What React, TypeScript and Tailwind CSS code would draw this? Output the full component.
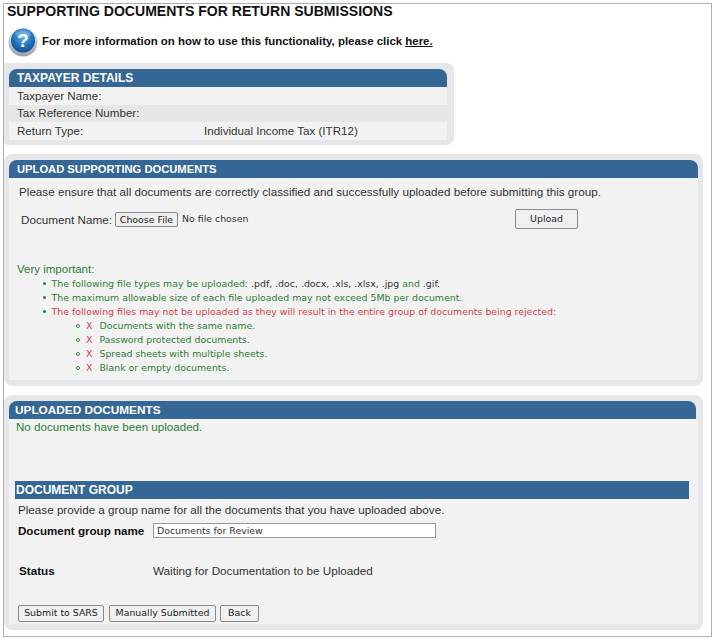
const sans = { fontFamily: '"Liberation Sans", Arial, sans-serif' };

function HelpIcon() {
  return (
    <svg width="30" height="30" viewBox="0 0 30 30" className="shrink-0">
      <defs>
        <radialGradient id="ball" cx="50%" cy="35%" r="65%">
          <stop offset="0%" stopColor="#5cb4ec" />
          <stop offset="60%" stopColor="#1f74bd" />
          <stop offset="100%" stopColor="#0f4f92" />
        </radialGradient>
        <linearGradient id="ring" x1="0" y1="0" x2="0" y2="1">
          <stop offset="0%" stopColor="#e4e8ec" />
          <stop offset="100%" stopColor="#9aa3ab" />
        </linearGradient>
      </defs>
      <ellipse cx="15" cy="15.5" rx="14.5" ry="14" fill="url(#ring)" />
      <circle cx="15" cy="13.5" r="12" fill="url(#ball)" />
      <ellipse cx="15" cy="7" rx="8" ry="4" fill="#ffffff" opacity="0.22" />
      <text x="15" y="20" textAnchor="middle" fontSize="19" fontWeight="700" fill="#ffffff" fontFamily="Liberation Sans, sans-serif">?</text>
    </svg>
  );
}

function Bar({ children, className = "" }: { children: React.ReactNode; className?: string }) {
  return (
    <div className={`h-[18px] bg-[#356796] font-bold leading-[18px] text-white ${className}`}>
      {children}
    </div>
  );
}

function Row({ label, value, alt }: { label: string; value?: string; alt?: boolean }) {
  return (
    <div className={`flex h-[17.5px] items-center pb-[1px] pl-2 text-[11.6px] text-[#333] ${alt ? "bg-[#e6e6e6]" : "bg-[#f2f2f2]"}`}>
      <span className="w-[187px]">{label}</span>
      <span>{value}</span>
    </div>
  );
}

const tiny = "font-['DejaVu_Sans',sans-serif] text-[9.4px]";

function Sub({ children }: { children: string }) {
  return (
    <li className="flex h-[14px] items-center">
      <span className="ml-[67px] mr-[6px] h-[4px] w-[4px] rounded-full border border-[#3d8a45]" />
      <span className="mr-[7px] text-[#d8404a]">X</span>
      <span className="text-[#2f7d38]">{children}</span>
    </li>
  );
}

function Dot() {
  return <span className="ml-[34px] mr-[6px] h-[2.5px] w-[2.5px] rounded-full bg-[#2f7d38]" />;
}

function Btn({ children, className = "" }: { children: string; className?: string }) {
  return (
    <button className={`rounded-[2px] border border-[#8a8a8a] bg-[#f0f0f0] text-[#222] ${tiny} ${className}`}>
      {children}
    </button>
  );
}

export default function App() {
  return (
    <div className="h-[642px] w-[722px] overflow-hidden bg-white pl-[3px] pt-[3px]" style={sans}>
      <div className="h-[634px] w-[709px] border border-[#b0b0b0]">
        <h1 className="ml-[3px] h-[17px] text-[14.05px] font-bold leading-[15px] text-[#111]">
          SUPPORTING DOCUMENTS FOR RETURN SUBMISSIONS
        </h1>
        <div className="ml-[4px] mt-[6px] flex h-[30px] items-center gap-[4px]">
          <HelpIcon />
          <p className="text-[11.45px] font-bold text-[#111]">
            For more information on how to use this functionality, please click <span className="underline">here.</span>
          </p>
        </div>

        <section className="mt-[6px] w-[450px] rounded-r-[8px] rounded-bl-[4px] bg-[#e6e7e8] px-[5px] pb-[5px] pt-[6px]">
          <Bar className="w-[438px] rounded-t-[8px] pl-[8px] text-[12px]">TAXPAYER DETAILS</Bar>
          <div className="w-[438px]">
            <Row label="Taxpayer Name:" />
            <Row label="Tax Reference Number:" alt />
            <Row label="Return Type:" value="Individual Income Tax (ITR12)" />
          </div>
        </section>

        <section className="mt-[9px] h-[232px] w-[699px] rounded-[8px] bg-[#e6e7e8] px-[5px] pb-[6px] pt-[6px]">
          <Bar className="rounded-t-[8px] pl-[8px] text-[11.2px] leading-[17px]">UPLOAD SUPPORTING DOCUMENTS</Bar>
          <div className="h-[202px] bg-[#f2f2f2]">
            <p className="pl-[10px] pt-[6px] text-[11.68px] leading-[15px] text-[#333]">
              Please ensure that all documents are correctly classified and successfully uploaded before submitting this group.
            </p>
            <div className="mt-[10px] flex h-[20px] items-center pl-[12px] text-[11.7px] text-[#333]">
              <span className="w-[94px] pt-[3px]">Document Name:</span>
              <Btn className="mt-[1px] h-[15px] w-[63px]">Choose File</Btn>
              <span className={`ml-[4px] w-[333px] pt-[1px] text-[#333] ${tiny}`}>No file chosen</span>
              <Btn className="h-[20px] w-[63px] pt-[1px]">Upload</Btn>
            </div>
            <p className="mt-[33px] pl-[8px] text-[11.5px] leading-[15px] text-[#2f7d38]">Very important:</p>
            <ul className={`${tiny} leading-[14px]`}>
              <li className="flex h-[14px] items-center text-[#2f7d38]">
                <Dot />
                <span>
                  The following file types may be uploaded: <span className="text-[#333]">.pdf, .doc, .docx, .xls, .xlsx, .jpg</span> and <span className="text-[#333]">.gif.</span>
                </span>
              </li>
              <li className="flex h-[14px] items-center text-[#2f7d38]">
                <Dot />
                <span>The maximum allowable size of each file uploaded may not exceed 5Mb per document.</span>
              </li>
              <li className="flex h-[14px] items-center text-[#d8404a]">
                <Dot />
                <span>The following files may not be uploaded as they will result in the entire group of documents being rejected:</span>
              </li>
              <Sub>Documents with the same name.</Sub>
              <Sub>Password protected documents.</Sub>
              <Sub>Spread sheets with multiple sheets.</Sub>
              <Sub>Blank or empty documents.</Sub>
            </ul>
          </div>
        </section>

        <section className="mt-[9px] h-[235px] w-[699px] rounded-[8px] bg-[#e6e7e8] px-[5px] pb-[6px] pt-[6px]">
          <Bar className="w-[687px] rounded-t-[8px] pl-[6px] text-[11.8px]">UPLOADED DOCUMENTS</Bar>
          <div className="h-[205px] bg-[#f2f2f2]">
            <p className="pl-[7px] text-[11.6px] leading-[15px] text-[#2f7d38]">No documents have been uploaded.</p>
            <div className="ml-[6px] mt-[47px] w-[674px]">
              <Bar className="pl-[1px] text-[12px]">DOCUMENT GROUP</Bar>
            </div>
            <p className="ml-[9px] mt-[3px] text-[11.67px] leading-[15px] text-[#333]">
              Please provide a group name for all the documents that you have uploaded above.
            </p>
            <div className="mt-[4px] flex h-[20px] items-center pl-[9px]">
              <span className="w-[135px] text-[11.6px] font-bold text-[#111]">Document group name</span>
              <input
                readOnly
                value="Documents for Review"
                className={`h-[15px] w-[283px] border border-[#9a9a9a] bg-white pl-[3px] text-[#333] ${tiny}`}
              />
            </div>
            <div className="mt-[22px] flex h-[16px] items-center pl-[10px] text-[11.7px]">
              <span className="w-[134px] font-bold text-[#111]">Status</span>
              <span className="text-[#333]">Waiting for Documentation to be Uploaded</span>
            </div>
            <div className="mt-[26px] flex pl-[9px]">
              <Btn className="h-[17px] w-[86px]">Submit to SARS</Btn>
              <Btn className="ml-[5px] h-[17px] w-[107px]">Manually Submitted</Btn>
              <Btn className="ml-[4px] h-[17px] w-[39px]">Back</Btn>
            </div>
          </div>
        </section>
      </div>
    </div>
  );
}
